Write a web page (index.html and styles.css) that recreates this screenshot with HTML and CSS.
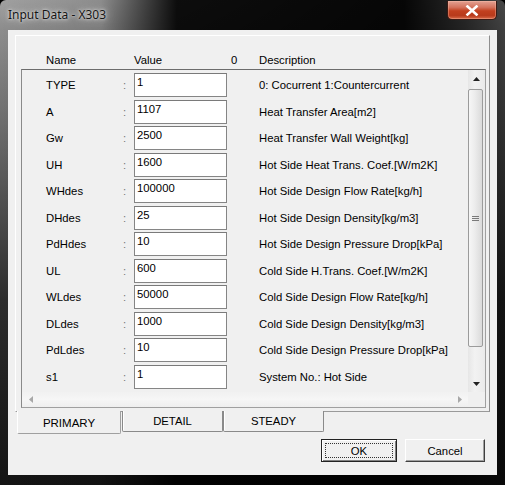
FILE: index.html
```html
<!DOCTYPE html>
<html>
<head>
<meta charset="utf-8">
<title>Input Data - X303</title>
<link rel="stylesheet" href="styles.css">
</head>
<body>
<div class="window">
  <div class="titlebar">
    <span class="title">Input Data - X303</span>
    <div class="close">
      <svg width="14" height="11" viewBox="0 0 14 11"><path d="M2.5 1.5 L11.5 9.5 M11.5 1.5 L2.5 9.5" stroke="#fff" stroke-width="2.6" stroke-linecap="square" fill="none"/></svg>
    </div>
  </div>
  <div class="client">
    <div class="page">
      <div class="head">
        <span class="h-name">Name</span><span class="h-val">Value</span><span class="h-zero">0</span><span class="h-desc">Description</span>
      </div>
      <div class="view">
        <div class="rows">
          <div class="row"><span class="nm">TYPE</span><span class="cl">:</span><span class="box">1</span><span class="ds">0: Cocurrent 1:Countercurrent</span></div>
          <div class="row"><span class="nm">A</span><span class="cl">:</span><span class="box">1107</span><span class="ds">Heat Transfer Area[m2]</span></div>
          <div class="row"><span class="nm">Gw</span><span class="cl">:</span><span class="box">2500</span><span class="ds">Heat Transfer Wall Weight[kg]</span></div>
          <div class="row"><span class="nm">UH</span><span class="cl">:</span><span class="box">1600</span><span class="ds">Hot Side Heat Trans. Coef.[W/m2K]</span></div>
          <div class="row"><span class="nm">WHdes</span><span class="cl">:</span><span class="box">100000</span><span class="ds">Hot Side Design Flow Rate[kg/h]</span></div>
          <div class="row"><span class="nm">DHdes</span><span class="cl">:</span><span class="box">25</span><span class="ds">Hot Side Design Density[kg/m3]</span></div>
          <div class="row"><span class="nm">PdHdes</span><span class="cl">:</span><span class="box">10</span><span class="ds">Hot Side Design Pressure Drop[kPa]</span></div>
          <div class="row"><span class="nm">UL</span><span class="cl">:</span><span class="box">600</span><span class="ds">Cold Side H.Trans. Coef.[W/m2K]</span></div>
          <div class="row"><span class="nm">WLdes</span><span class="cl">:</span><span class="box">50000</span><span class="ds">Cold Side Design Flow Rate[kg/h]</span></div>
          <div class="row"><span class="nm">DLdes</span><span class="cl">:</span><span class="box">1000</span><span class="ds">Cold Side Design Density[kg/m3]</span></div>
          <div class="row"><span class="nm">PdLdes</span><span class="cl">:</span><span class="box">10</span><span class="ds">Cold Side Design Pressure Drop[kPa]</span></div>
          <div class="row"><span class="nm">s1</span><span class="cl">:</span><span class="box">1</span><span class="ds">System No.: Hot Side</span></div>
        </div>
        <div class="vscroll">
          <div class="sbtn"><svg width="7" height="4" viewBox="0 0 7 4"><path d="M0 4 L3.5 0 L7 4 Z" fill="#222"/></svg></div>
          <div class="thumb"><svg width="7" height="5" viewBox="0 0 7 5"><path d="M0 0.5 H7 M0 2.5 H7 M0 4.5 H7" stroke="#7a7a7a" stroke-width="1"/></svg></div>
          <div class="spacer"></div>
          <div class="sbtn"><svg width="7" height="4" viewBox="0 0 7 4"><path d="M0 0 L3.5 4 L7 0 Z" fill="#222"/></svg></div>
        </div>
        <div class="hscroll">
          <div class="hbtn"><svg width="4" height="7" viewBox="0 0 4 7"><path d="M4 0 L0 3.5 L4 7 Z" fill="#a8a8a8"/></svg></div>
          <div class="spacer"></div>
          <div class="hbtn"><svg width="4" height="7" viewBox="0 0 4 7"><path d="M0 0 L4 3.5 L0 7 Z" fill="#a8a8a8"/></svg></div>
        </div>
        <div class="corner"></div>
      </div>
    </div>
    <div class="tabs">
      <div class="tab active">PRIMARY</div>
      <div class="tab">DETAIL</div>
      <div class="tab">STEADY</div>
    </div>
    <div class="buttons">
      <div class="btn default"><span class="focus">OK</span></div>
      <div class="btn cancel">Cancel</div>
    </div>
  </div>
</div>
</body>
</html>
```
FILE: styles.css
```css
html, body {
  margin: 0;
  padding: 0;
  background: #000;
}
body {
  font-family: "Liberation Sans", Arial, sans-serif;
  font-size: 11.3px;
  color: #000;
}
.window {
  width: 505px;
  height: 485px;
  box-sizing: border-box;
  padding-bottom: 10px;
  display: flex;
  flex-direction: column;
  border-radius: 6px 6px 0 0;
  background-image:
    linear-gradient(to right, rgba(0,0,0,0) 0, rgba(0,0,0,0.12) 20%, rgba(0,0,0,0.92) 35%, rgba(0,0,0,0.96) 80%, rgba(0,0,0,0.75) 92%, rgba(0,0,0,0.55) 100%),
    linear-gradient(to bottom, #a0a0a0 0, #8c8c8c 30px, #6e6e6e 120px, #2c2c2c 300px, #141414 485px);
}
.titlebar {
  height: 30px;
  display: flex;
  align-items: flex-start;
  padding: 0 8px;
}
.title {
  font-family: "Noto Sans", "Liberation Sans", sans-serif;
  font-size: 12px;
  line-height: 14px;
  margin-top: 8px;
  color: #151515;
  text-shadow: 0 0 8px #d0d0d0, 0 0 4px #d8d8d8, 0 0 2px #e0e0e0;
}
.close {
  margin-left: auto;
  margin-top: 1px;
  width: 50px;
  height: 19px;
  box-sizing: border-box;
  border: 1px solid #3a1a14;
  border-top: none;
  border-radius: 0 0 5px 5px;
  background: linear-gradient(to bottom, #e3a293 0, #d4735e 35%, #c2401f 55%, #b83a1c 80%, #d86a48 100%);
  display: flex;
  align-items: center;
  justify-content: center;
  box-shadow: inset 0 0 0 1px rgba(255,200,180,0.35);
}
.client {
  margin: 0 8px;
  flex: 1;
  background: #f0f0f0;
  padding: 5px 7px 0 7px;
  display: flex;
  flex-direction: column;
}
.page {
  height: 377px;
  box-sizing: border-box;
  border: 1px solid;
  border-color: #ffffff #8e8e8e #9a9a9a #ffffff;
  display: flex;
  flex-direction: column;
  padding: 0 3px 3px 5px;
}
.head {
  height: 33px;
  box-sizing: border-box;
  display: flex;
  align-items: flex-end;
  padding: 0 0 2px 25px;
  line-height: 14px;
}
.h-name { width: 88px; }
.h-val { width: 97px; }
.h-zero { width: 28px; }
.view {
  flex: 1;
  border: 1px solid #a0a0a0;
  border-top-color: #6c6c6c;
  border-left-color: #8a8a8a;
  display: grid;
  grid-template-columns: 1fr 17px;
  grid-template-rows: 1fr 15px;
  background: #f0f0f0;
}
.rows {
  padding: 2px 0 0 24px;
  overflow: hidden;
}
.row {
  height: 26.5px;
  display: grid;
  grid-template-columns: 77px 11px 93px 1fr;
  align-items: center;
  line-height: 14px;
}
.cl {
  color: #777;
}
.box {
  height: 24px;
  box-sizing: border-box;
  border: 1px solid #858585;
  border-top-color: #7a7a7a;
  background: #fff;
  padding: 1px 0 0 2px;
}
.ds {
  padding-left: 32px;
  white-space: nowrap;
}
.vscroll {
  display: flex;
  flex-direction: column;
  background: linear-gradient(to right, #e6e6e6, #f2f2f2 40%, #eaeaea);
}
.sbtn {
  height: 17px;
  display: flex;
  align-items: center;
  justify-content: center;
}
.thumb {
  margin: 2px 2px 0 0;
  height: 258px;
  box-sizing: border-box;
  border: 1px solid #9b9b9b;
  border-radius: 2px;
  background: linear-gradient(to right, #f6f6f6, #ececec 45%, #dadada);
  display: flex;
  align-items: center;
  justify-content: center;
}
.spacer { flex: 1; }
.hscroll {
  display: flex;
  background: linear-gradient(to bottom, #f1f1f1, #f6f6f6 50%, #efefef);
}
.hbtn {
  width: 17px;
  display: flex;
  align-items: center;
  justify-content: center;
}
.corner {
  background: #f0f0f0;
}
.tabs {
  display: flex;
  align-items: flex-start;
  padding-left: 2px;
  margin-top: -1px;
}
.tab {
  width: 101px;
  height: 21px;
  box-sizing: border-box;
  border: 1px solid #8a8a8a;
  border-top: none;
  border-radius: 0 0 2px 2px;
  box-shadow: inset 1px 0 0 #fff;
  background: #f0f0f0;
  display: flex;
  align-items: center;
  justify-content: center;
  line-height: 14px;
}
.tab.active {
  width: 104px;
  height: 23px;
  border-color: #a0a0a0;
  border-left-color: #fff;
  box-shadow: none;
  padding-top: 2px;
  margin-right: 1px;
  font-size: 11.5px;
}
.buttons {
  display: flex;
  justify-content: flex-end;
  gap: 8px;
  padding-right: 5px;
  margin-top: 5px;
}
.btn {
  height: 23px;
  box-sizing: border-box;
  display: flex;
  align-items: center;
  justify-content: center;
  line-height: 14px;
  background: #f0f0f0;
}
.btn.default {
  width: 76px;
  border: 1px solid #222;
  box-shadow: inset 1px 1px 0 #fff, inset -1px -1px 0 #808080;
  padding: 3px;
}
.focus {
  flex: 1;
  align-self: stretch;
  border: 1px dotted #333;
  display: flex;
  align-items: center;
  justify-content: center;
}
.btn.cancel {
  width: 80px;
  border: 1px solid;
  border-color: #fff #404040 #404040 #fff;
  box-shadow: inset -1px -1px 0 #a0a0a0;
}
```
